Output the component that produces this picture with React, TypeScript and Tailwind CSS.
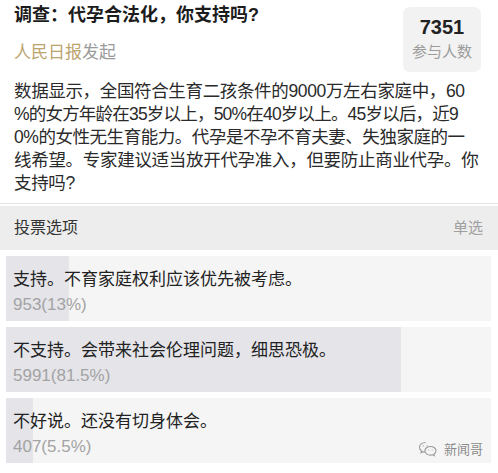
import React from "react";

const font = { fontFamily: '"Liberation Sans", "Noto Sans CJK SC", sans-serif' };

const lines = [
  { t: "数据显示，全国符合生育二孩条件的9000万左右家庭中，60", c: "tracking-[-0.35px]" },
  { t: "%的女方年龄在35岁以上，50%在40岁以上。45岁以后，近9", c: "tracking-[-0.8px]" },
  { t: "0%的女性无生育能力。代孕是不孕不育夫妻、失独家庭的一", c: "tracking-[-0.45px]" },
  { t: "线希望。专家建议适当放开代孕准入，但要防止商业代孕。你", c: "tracking-[-0.3px]" },
  { t: "支持吗?", c: "tracking-[-0.35px]" },
];

const options = [
  { text: "支持。不育家庭权利应该优先被考虑。", count: "953(13%)", pct: 13 },
  { text: "不支持。会带来社会伦理问题，细思恐极。", count: "5991(81.5%)", pct: 81.5 },
  { text: "不好说。还没有切身体会。", count: "407(5.5%)", pct: 5.5 },
];

function WeChatIcon() {
  return (
    <svg width="20" height="16" viewBox="0 0 20 16" fill="none" stroke="#9a9a9a" strokeWidth="1.1">
      <path d="M7.5 1.5c-3.5 0-6 2.2-6 4.8 0 1.5.8 2.8 2.1 3.7l-.5 1.7 2-1c.7.2 1.5.3 2.4.3" />
      <path d="M12.5 5.5c-3.2 0-5.6 2-5.6 4.3s2.4 4.3 5.6 4.3c.7 0 1.4-.1 2-.3l1.8.9-.5-1.5c1.3-.8 2.2-2 2.2-3.4 0-2.3-2.4-4.3-5.5-4.3z" />
      <circle cx="5.2" cy="4.8" r="0.6" fill="#9a9a9a" stroke="none" />
      <circle cx="9" cy="4.8" r="0.6" fill="#9a9a9a" stroke="none" />
      <circle cx="10.8" cy="9" r="0.5" fill="#9a9a9a" stroke="none" />
      <circle cx="14.2" cy="9" r="0.5" fill="#9a9a9a" stroke="none" />
    </svg>
  );
}

export default function App() {
  return (
    <div className="w-[498px] h-[473px] bg-white overflow-hidden relative" style={font}>
      <div className="flex justify-between items-start pt-[3px] pl-[14px] pr-[17px]">
        <div className="flex flex-col">
          <div className="text-[18px] leading-[24px] font-bold text-[#1c1c1c] whitespace-nowrap">
            调查：代孕合法化，你支持吗?
          </div>
          <div className="mt-[14px] text-[17px] leading-[24px] whitespace-nowrap">
            <span className="text-[#bba46e]">人民日报</span>
            <span className="text-[#9a9a9a]">发起</span>
          </div>
        </div>
        <div className="mt-[4px] w-[78px] h-[65px] rounded-[7px] bg-[#f2f2f2] flex flex-col items-center pt-[8px]">
          <div className="text-[20px] leading-[24px] font-bold text-[#222]">7351</div>
          <div className="text-[15px] leading-[22px] mt-[2px] text-[#9c9c9c]">参与人数</div>
        </div>
      </div>

      <div className="pt-[8px] pl-[14px] text-[17.5px] leading-[23px] text-[#2a2a2a]">
        {lines.map((l, i) => (
          <div key={i} className={`whitespace-nowrap ${l.c}`}>
            {l.t}
          </div>
        ))}
      </div>

      <div className="mt-[8px] h-px bg-[#e6e6e6]" />
      <div className="mt-[2px] h-[44px] bg-[#ededed] flex items-center justify-between pl-[14px] pr-[15px]">
        <span className="text-[16px] text-[#333]">投票选项</span>
        <span className="text-[15px] text-[#a0a0a0]">单选</span>
      </div>

      <div className="mt-[6px] flex flex-col gap-[6px] px-[6px] pr-[7px]">
        {options.map((o, i) => (
          <div key={i} className="relative h-[65px] bg-[#f5f5f5] overflow-hidden">
            <div className="absolute left-0 top-0 bottom-0 bg-[#e4e4e9]" style={{ width: `${o.pct}%` }} />
            <div className="relative pt-[12px] pl-[7px]">
              <div className="text-[17px] leading-[24px] text-[#222] whitespace-nowrap">{o.text}</div>
              <div className="mt-[1px] text-[17px] leading-[24px] text-[#a3a3a3] whitespace-nowrap">{o.count}</div>
            </div>
          </div>
        ))}
      </div>

      <div className="absolute right-[15px] bottom-[14px] flex items-center gap-[6px]">
        <WeChatIcon />
        <span className="text-[13px] text-[#8a8a8a]" style={{ textShadow: "0 0 2px #fff" }}>
          新闻哥
        </span>
      </div>
    </div>
  );
}
